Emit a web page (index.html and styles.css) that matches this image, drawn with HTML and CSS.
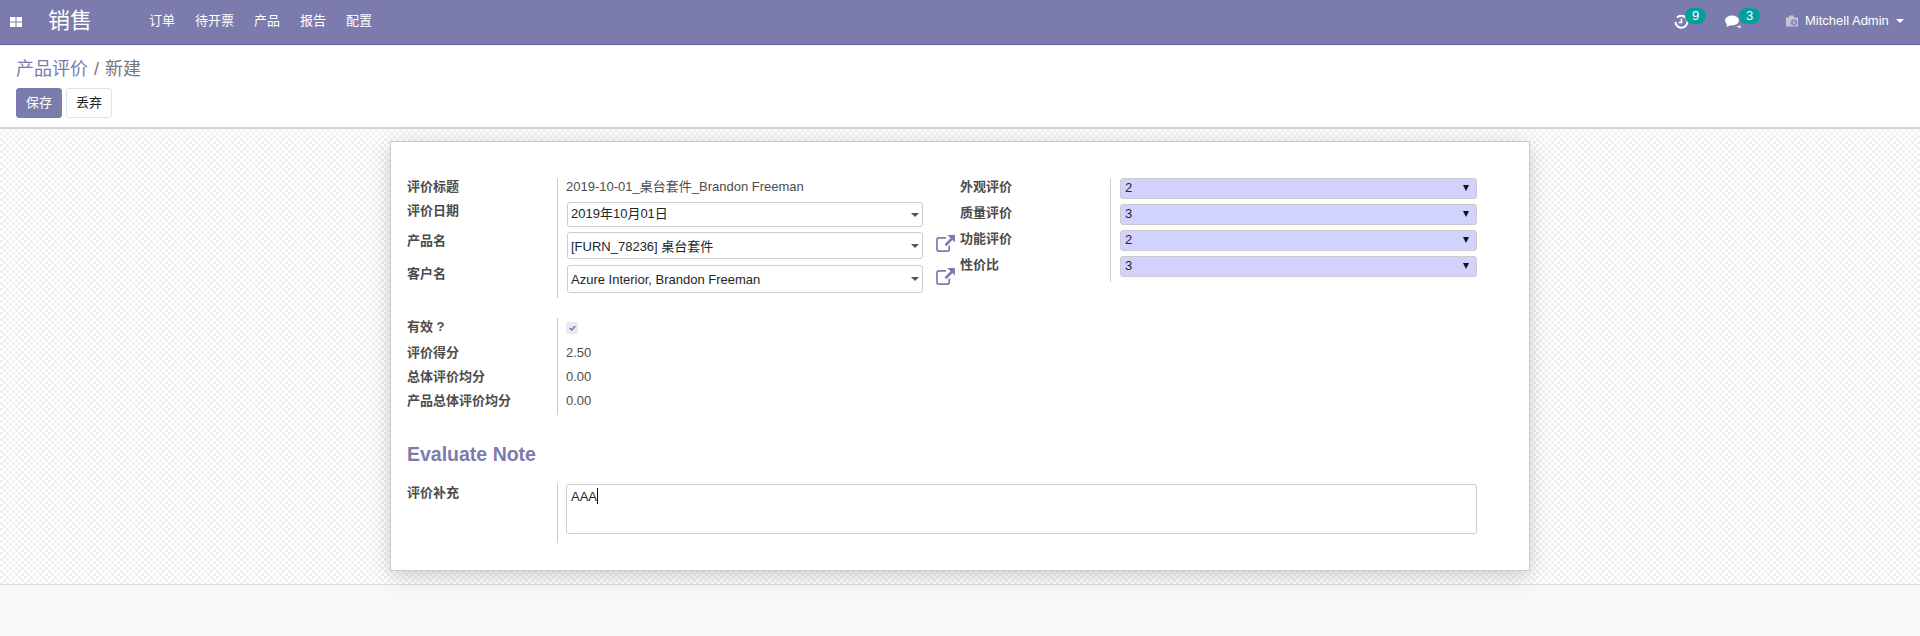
FILE: index.html
```html
<!DOCTYPE html>
<html lang="zh-CN">
<head>
<meta charset="utf-8">
<title>产品评价</title>
<link rel="stylesheet" href="styles.css">
</head>
<body>
<header class="nav">
  <svg class="apps" width="12" height="10" viewBox="0 0 12 10"><path fill="#fff" d="M0 0h5.500v4.500H0zM6.500 0H12v4.500H6.500zM0 5.500h5.500V10H0zM6.500 5.500H12V10H6.500z"/></svg>
  <span class="brand">销售</span>
  <nav class="menu"><a>订单</a><a>待开票</a><a>产品</a><a>报告</a><a>配置</a></nav>
  <div class="systray">
    <span class="tray tray-clock">
      <svg width="15" height="14" viewBox="0 0 15 14"><path fill="none" stroke="#fff" stroke-width="2" d="M3 2.600A6 6 0 1 1 1.400 7"/><path fill="none" stroke="#fff" stroke-width="1.500" d="M7.500 3.500V7.500H4.500"/></svg>
      <span class="badge">9</span>
    </span>
    <span class="tray tray-chat">
      <svg width="17" height="15" viewBox="0 0 17 15"><ellipse cx="7" cy="5.500" rx="7" ry="5" fill="#fff"/><path fill="#fff" d="M2 8.500L1.500 12 6 10zM10 11.500c2 0 4-.5 5-1.500l1 3.500-3-1.500z"/></svg>
      <span class="badge">3</span>
    </span>
    <span class="user">
      <svg width="14" height="12" viewBox="0 0 14 12"><path fill="#c4c4d6" d="M1 2.500h2.500L4.500 .5h4l1 2h3.500v9H1z"/><circle cx="9" cy="7.500" r="3.300" fill="#8d8cb6"/><path fill="#c4c4d6" d="M8.500 5.500h1v2h1L9 9.500 7.500 7.500h1z"/></svg>
      <span class="user-name">Mitchell Admin</span>
      <span class="caret"></span>
    </span>
  </div>
</header>

<section class="panel">
  <div class="crumbs"><a class="crumb-link">产品评价</a><span class="crumb-sep">/</span><span>新建</span></div>
  <div class="actions"><button class="btn btn-primary">保存</button><button class="btn btn-plain">丢弃</button></div>
</section>

<main class="content">
  <div class="card">
    <div class="cols">
      <div class="group group-main">
        <div class="row row-a"><div class="lbl">评价标题</div><div class="val">2019-10-01_桌台套件_Brandon Freeman</div></div>
        <div class="row row-b"><div class="lbl">评价日期</div><div class="val"><div class="combo combo-b">2019年10月01日</div></div></div>
        <div class="row row-c"><div class="lbl">产品名</div><div class="val val-link"><div class="combo combo-c">[FURN_78236] 桌台套件</div>
          <svg class="ext" width="19" height="17" viewBox="0 0 20 18"><path fill="none" stroke="#7c7bad" stroke-width="1.800" d="M10.500 3H3Q1 3 1 5v10q0 2 2 2h9q2 0 2-2v-4"/><path fill="#7c7bad" d="M12 0h8v8l-2.600-2.600-6.400 6.400-2-2 6.400-6.400z"/></svg></div></div>
        <div class="row row-d"><div class="lbl">客户名</div><div class="val val-link"><div class="combo combo-d">Azure Interior, Brandon Freeman</div>
          <svg class="ext" width="19" height="17" viewBox="0 0 20 18"><path fill="none" stroke="#7c7bad" stroke-width="1.800" d="M10.500 3H3Q1 3 1 5v10q0 2 2 2h9q2 0 2-2v-4"/><path fill="#7c7bad" d="M12 0h8v8l-2.600-2.600-6.400 6.400-2-2 6.400-6.400z"/></svg></div></div>
      </div>
      <div class="group group-side">
        <div class="row row-s"><div class="lbl">外观评价</div><div class="val val-s"><div class="sel">2</div></div></div>
        <div class="row row-s"><div class="lbl">质量评价</div><div class="val val-s"><div class="sel">3</div></div></div>
        <div class="row row-s"><div class="lbl">功能评价</div><div class="val val-s"><div class="sel">2</div></div></div>
        <div class="row row-s row-last"><div class="lbl">性价比</div><div class="val val-s"><div class="sel">3</div></div></div>
      </div>
    </div>

    <div class="group group-score">
      <div class="row row-first"><div class="lbl">有效 ?</div><div class="val val-check"><span class="check"><svg width="7" height="6" viewBox="0 0 7 6"><path fill="none" stroke="#7c7bad" stroke-width="1.600" d="M.7 3l2 2L6.300 1"/></svg></span></div></div>
      <div class="row row-n"><div class="lbl">评价得分</div><div class="val">2.50</div></div>
      <div class="row row-n"><div class="lbl">总体评价均分</div><div class="val">0.00</div></div>
      <div class="row row-n"><div class="lbl">产品总体评价均分</div><div class="val">0.00</div></div>
    </div>

    <h2 class="section-title">Evaluate Note</h2>

    <div class="row row-note"><div class="lbl">评价补充</div><div class="val"><div class="note">AAA<span class="cursor"></span></div></div></div>
  </div>
</main>

<footer class="foot"></footer>
</body>
</html>
```

FILE: styles.css
```css
* { box-sizing: border-box; }
html, body { height: 100%; }
body {
  margin: 0;
  display: flex;
  flex-direction: column;
  overflow: hidden;
  background: #fff;
  color: #4c4c4c;
  font: 13px/18px "Liberation Sans", "Noto Sans CJK SC", sans-serif;
}

/* top bar */
.nav {
  height: 45px;
  flex: none;
  display: flex;
  align-items: center;
  padding-left: 10px;
  padding-right: 16px;
  background: #7c7bad;
  border-bottom: 1px solid #5f5e97;
  color: #fff;
}
.apps { flex: none; margin-top: -1px; }
.brand { margin-left: 26px; font-size: 22px; line-height: 30px; width: 43px; white-space: nowrap; margin-top: -3px; }
.menu { display: flex; gap: 20px; margin-left: 58px; margin-top: -2px; }
.menu a { color: #fff; }
.systray { margin-left: auto; display: flex; align-items: center; height: 30px; margin-top: -6px; }
.tray { display: flex; align-items: flex-start; height: 24px; }
.tray svg { margin-top: 7px; }
.tray-clock { width: 51px; margin-top: 2px; margin-left: 2px; }
.tray-chat { width: 60px; margin-top: 2px; }
.badge {
  width: 21px;
  height: 16px;
  margin-left: -4px;
  border-radius: 8px;
  background: #00a09d;
  color: #fff;
  font-size: 13px;
  line-height: 15px;
  text-align: center;
}
.tray-chat .badge { margin-left: -3px; }
.user { display: flex; align-items: center; margin-top: 3px; }
.user-name { margin-left: 6px; width: 91px; white-space: nowrap; }
.caret {
  width: 0; height: 0;
  border-left: 4px solid transparent;
  border-right: 4px solid transparent;
  border-top: 4px solid #fff;
}

/* control panel */
.panel {
  height: 84px;
  flex: none;
  padding: 12px 16px 0;
  border-bottom: 2px solid #d0d4da;
  background: #fff;
}
.crumbs { font-size: 18px; line-height: 24px; color: #777; }
.crumb-link { color: #7c7bad; }
.crumb-sep { margin: 0 6px; }
.actions { display: flex; gap: 4px; margin-top: 7px; }
.btn {
  width: 46px;
  height: 30px;
  padding: 0;
  border-radius: 3px;
  font: 13px/18px "Liberation Sans", "Noto Sans CJK SC", sans-serif;
}
.btn-primary { background: #7c7bad; border: 1px solid #7c7bad; color: #fff; }
.btn-plain { background: #fff; border: 1px solid #dee2e6; color: #212529; }

/* sheet */
.content {
  height: 455px;
  flex: none;
  padding-top: 12px;
  background: conic-gradient(#f1f1f1 25%, #fff 0 50%, #f1f1f1 0 75%, #fff 0) 0 0 / 6px 6px;
}
.card {
  position: relative;
  width: 1140px;
  height: 430px;
  margin-left: 390px;
  padding: 36px 16px 0;
  background: #fff;
  border: 1px solid #c9c9d6;
  box-shadow: 0 5px 20px -1px rgba(0, 0, 0, .2);
}
.cols { display: flex; align-items: flex-start; }
.group-main { width: 553px; }
.group-side { width: 530px; }
.group-score { margin-top: 20px; }

.row { display: flex; }
.lbl { width: 150px; flex: none; font-weight: 700; white-space: nowrap; }
.val { flex: 1; min-width: 0; border-left: 1px solid #ccc; padding-left: 8px; white-space: nowrap; }

.row-a { height: 23px; }
.row-b { height: 30px; }
.row-c { height: 33px; }
.row-d { height: 34px; }
.row-b .lbl, .row-c .lbl, .row-d .lbl { padding-top: 1px; }
.row-b .val, .row-c .val, .row-d .val { padding-top: 1px; }
.val-link { display: flex; align-items: flex-start; }

.combo {
  position: relative;
  width: 356px;
  padding: 0 3px 0 3px;
  margin-left: 1px;
  border: 1px solid #ccc;
  border-radius: 3px;
  color: #212529;
  background: #fff;
}
.combo-b { height: 25px; line-height: 22px; }
.combo-c { height: 27px; line-height: 27px; }
.combo-d { height: 28px; line-height: 28px; }
.combo::after {
  content: "";
  position: absolute;
  right: 3px;
  top: 50%;
  margin-top: -2px;
  border-left: 4px solid transparent;
  border-right: 4px solid transparent;
  border-top: 4px solid #555;
}
.ext { flex: none; margin: 3px 0 0 13px; }

.row-s { height: 26px; }
.row-last { height: 26px; }
.val-s { padding-left: 9px; }
.sel {
  position: relative;
  width: 357px;
  height: 21px;
  padding-left: 4px;
  line-height: 17px;
  color: #212529;
  background: #d2d2ff;
  border: 1px solid #ccc;
  border-radius: 3px;
}
.sel::after {
  content: "";
  position: absolute;
  right: 7px;
  top: 6px;
  border-left: 3px solid transparent;
  border-right: 3px solid transparent;
  border-top: 6px solid #111;
}

.row-first { height: 25px; }
.row-n { height: 24px; }
.row-n .lbl, .row-n .val { padding-top: 1px; }
.val-check { padding-top: 4px; }
.check {
  display: flex;
  align-items: center;
  justify-content: center;
  width: 12px;
  height: 12px;
  border-radius: 2px;
  background: #e9ecef;
}

.section-title {
  margin: 27px 0 17px;
  font-size: 19.5px;
  line-height: 24px;
  font-weight: 700;
  color: #7c7bad;
}
.row-note { height: 60px; }
.row-note .lbl { padding-top: 1px; }
.note {
  width: 911px;
  height: 50px;
  margin-top: 1px;
  padding: 3px 4px;
  color: #212529;
  border: 1px solid #ccc;
  border-radius: 3px;
}
.cursor { display: inline-block; width: 1px; height: 16px; background: #111; vertical-align: -3px; }

.foot {
  flex: 1;
  background: #f8f8f8;
  border-top: 1px solid #ddd;
}
```
